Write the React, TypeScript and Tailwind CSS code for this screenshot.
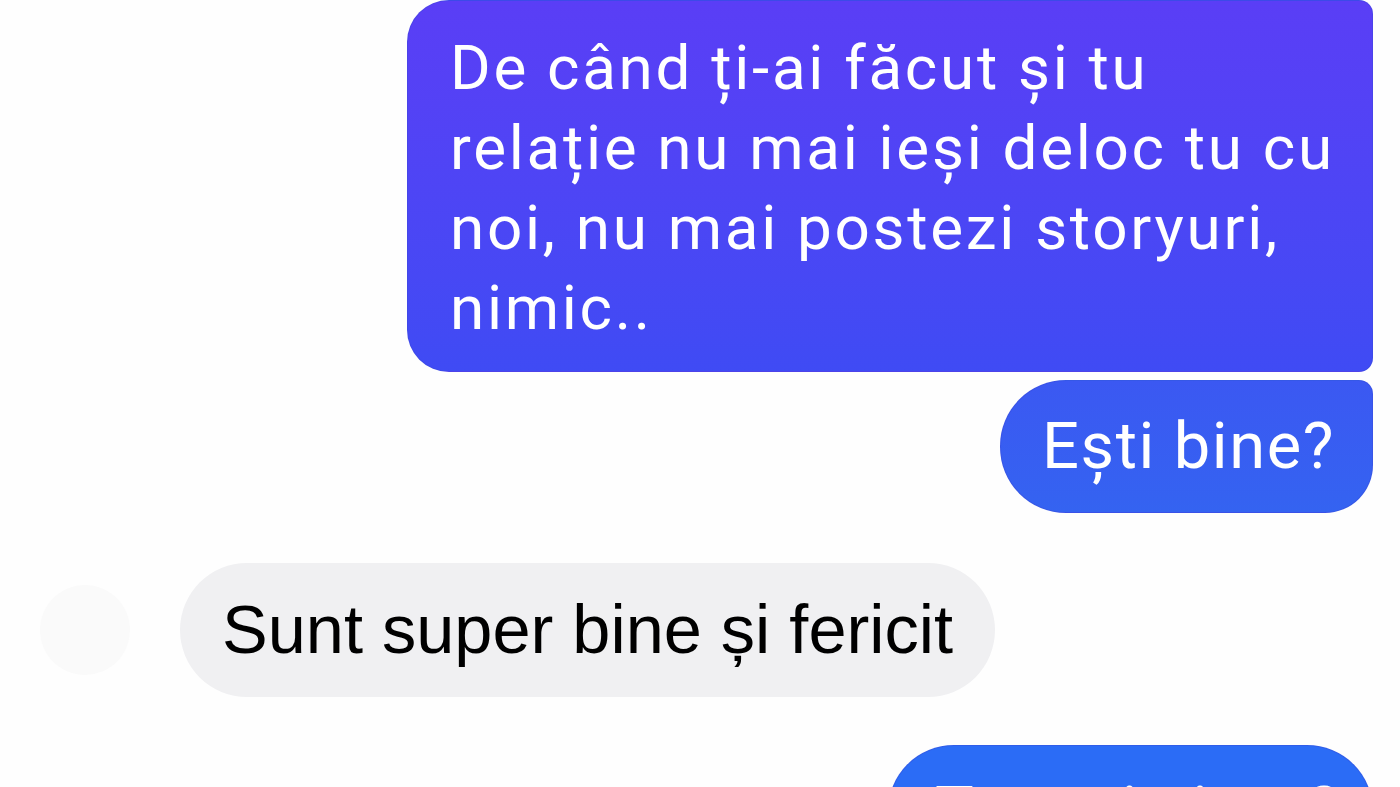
import type { ReactNode } from "react";

/**
 * Conversație tip Messenger — bule trimise (albastru, dreapta) și primite (gri, stânga).
 */

const roboto = { fontFamily: "Roboto, 'Noto Sans', sans-serif" };
const helv = { fontFamily: "'Liberation Sans', Arial, sans-serif" };

function SentBubble({
  children,
  className,
}: {
  children: ReactNode;
  className: string;
}) {
  return (
    <div
      className={
        "border border-[#3a48d6]/40 text-white antialiased " + className
      }
      style={roboto}
    >
      {children}
    </div>
  );
}

export default function App() {
  return (
    <div className="h-[787px] w-full overflow-hidden bg-[#fefefe]">
      <div className="flex flex-col pr-[27px]">
        {/* grup mesaje trimise */}
        <div className="flex flex-col items-end gap-[8px]">
          <SentBubble className="h-[372px] w-[966px] rounded-l-[42px] rounded-r-[14px] bg-gradient-to-b from-[#5a3ef6] to-[#3f4bf4] pl-[42px] pt-[27px] text-[62px] leading-[80px] tracking-[2.7px]">
            De când ți-ai făcut și tu
            <br />
            relație nu mai ieși deloc tu cu
            <br />
            noi, nu mai postezi storyuri,
            <br />
            nimic..
          </SentBubble>
          <SentBubble className="flex h-[133px] w-[373px] items-center rounded-l-[66px] rounded-tr-[14px] rounded-br-[48px] bg-gradient-to-b from-[#3b58f2] to-[#3463f1] pl-[41px] text-[65px] leading-none tracking-[1.6px]">
            Ești bine?
          </SentBubble>
        </div>

        {/* mesaj primit */}
        <div className="mt-[50px] flex items-center">
          <div className="ml-[40px] h-[90px] w-[90px] rounded-full bg-[#fafafa]" />
          <div
            className="ml-[50px] flex h-[134px] w-[815px] items-center rounded-[67px] bg-[#f0f0f2] pl-[42px] text-[68.5px] leading-none text-black"
            style={helv}
          >
            Sunt super bine și fericit
          </div>
        </div>

        {/* următorul mesaj trimis */}
        <div className="mt-[48px] flex justify-end">
          <SentBubble className="h-[133px] w-[485px] rounded-[66px] bg-[#2b6cf6] pl-[46px] pt-[32px] text-[65px] leading-none tracking-[1.6px]">
            Tu ești sigur?
          </SentBubble>
        </div>
      </div>
    </div>
  );
}
